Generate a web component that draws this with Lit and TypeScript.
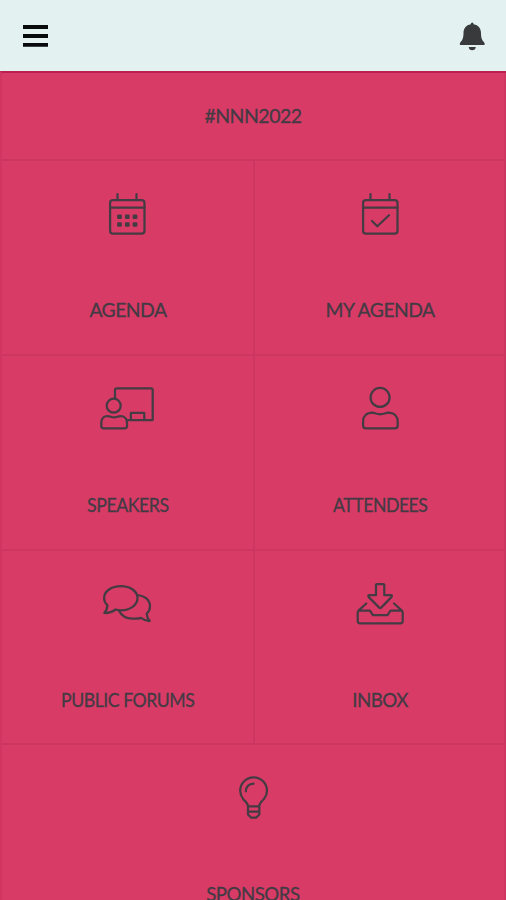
import { LitElement, html, svg, css } from "lit";
import { customElement } from "lit/decorators.js";

const calendar = svg`<rect x="13.1" y="9" width="34.4" height="33.6" rx="2.8"/><path d="M13 16.6H47.5M20.5 3V9M39.5 3V9"/>`;
const dots = [22.5, 30.3, 38].flatMap((x) =>
  [25.7, 33.5].map((y) => svg`<rect class="solid" x=${x - 2.4} y=${y - 2.3} width="4.8" height="4.6" rx="1.3"/>`)
);
const icons: Record<string, unknown> = {
  agenda: svg`${calendar}${dots}`,
  mine: svg`${calendar}<path d="M22 30L27.3 35.3L39 24.3"/>`,
  speakers: svg`<path d="M18 11.7V4Q18 2.3 19.7 2.3H54Q55.7 2.3 55.7 4V34H30.3M33.9 34V26.8H47.3V34"/><circle cx="16.7" cy="19.7" r="7"/><path d="M10 30Q12 30 13.8 30.8Q17 32 20.2 30.8Q22 30 24 30Q30 30.6 30 37V40Q30 42.3 27.7 42.3H6.6Q4.3 42.3 4.3 40V37Q4.3 30.6 10 30Z"/>`,
  attendees: svg`<circle cx="30.1" cy="11.4" r="9.5"/><path d="M21.5 26.7Q24 26.7 26 27.5Q30.3 29 34.6 27.5Q36.6 26.7 39 26.7Q47.7 27.3 47.7 36V39.5Q47.7 42.3 44.9 42.3H16Q13.1 42.3 13.1 39.5V36Q13.1 27.3 21.5 26.7Z"/>`,
  forums: svg`<path d="M10.4 24.1Q7.1 21.2 7.1 17.2C7.1 10.3 14.5 5 23.9 5S40.5 10.3 40.5 17.2S33 29.3 23.9 29.3Q21.2 29.3 18.5 28.5Q13.5 32.3 7.3 32Q10.3 28.6 10.4 24.1Z"/><path d="M40.2 14C47.5 14.5 53 19 53 25.3Q53 29.7 49.7 32.8Q49.8 36.8 52.8 40Q48.5 40.2 44 36.9Q40 38.2 35.5 37.5C29 37.5 24.5 34.8 22 29.7"/>`,
  inbox: svg`<path d="M26 4Q26 3 27 3H33.3Q34.3 3 34.3 4V14.2H40.5Q43 14.2 41.2 16.4L31.4 26.4Q30.2 27.5 29 26.4L19 16.4Q17.2 14.2 19.7 14.2H26Z"/><path d="M16.3 22.5L8.5 29.7Q7.7 30.6 7.7 32V40Q7.7 42.3 10 42.3H50.4Q52.7 42.3 52.7 40V32Q52.7 30.6 51.9 29.7L44 22.5M8.5 29.7H20L22.9 34.2H37.5L40.5 29.7H51.9"/>`,
  sponsors: svg`<path d="M25 31.3Q25 28.5 20.3 24.3Q17.2 20.3 17.2 15.8A13.4 13.4 0 0 1 44 15.8Q44 20.3 40.8 24.3Q36.3 28.5 36.3 31.3ZM25 31.3V39.5L28 42.5H33.3L36.3 39.5V31.3M25 36.6H36.3M22.8 16.3Q23.3 9 30.6 8.6"/>`,
};

@customElement("app-root")
export class AppRoot extends LitElement {
  static styles = css`
    :host { display: block; height: 900px; overflow: hidden; background: #d93b67; color: #443a43; font-family: Lato, "Open Sans", sans-serif; }
    .bar { height: 71px; box-sizing: border-box; padding: 0 21px 0 23px; display: flex; justify-content: space-between; align-items: center; background: #e3f1f1; }
    .menu { width: 26px; height: 22px; }
    .bell { width: 26px; height: 30px; }
    .grid { display: grid; grid-template-columns: 253px 251px; grid-template-rows: 88px 195px 195px 194px 195px; box-sizing: border-box; border-top: 2px solid #be1f51; border-left: 2px solid #d03661; width: 506px; }
    .cell { box-sizing: border-box; border-bottom: 2px solid #cc3660; border-right: 2px solid #cc3660; display: flex; flex-direction: column; align-items: center; min-width: 0; }
    .wide { grid-column: span 2; border-right-color: #d03661; }
    .title { justify-content: center; }
    .icon { width: 60px; height: 48px; margin: 30px 1px 0 0; fill: none; stroke: #443b43; stroke-width: 2.25; stroke-linejoin: round; stroke-linecap: round; flex: none; }
    .right { padding-left: 2px; }
    .wide .icon { margin-right: 0; }
    .solid { fill: #443b43; stroke: none; }
    .label { font-size: 19.5px; line-height: 24px; letter-spacing: -0.5px; white-space: nowrap; -webkit-text-stroke: 0.3px #443a43; }
    .icon + .label { margin-top: 59px; }
  `;

  tile(icon: string, text: string, scale: number, place = "") {
    return html`<div class="cell ${place}">
      <svg class="icon" viewBox="0 0 60 48">${icons[icon]}</svg>
      <span class="label" style="transform:scaleX(${scale})">${text}</span>
    </div>`;
  }

  render() {
    return html`
      <header class="bar">
        <svg class="menu" viewBox="0 0 26 22"><path d="M0 2H25M0 11H25M0 19.8H25" stroke="#080b0c" stroke-width="3.8"/></svg>
        <svg class="bell" viewBox="0 0 26 30"><path fill="#393a3c" d="M11.8 3.2Q11.8 1.5 13.2 1.5T14.6 3.2C19.5 4 22 7.5 22 12C22 17 23 19.2 25.2 21.4Q26 22.3 25.5 24H1Q.5 22.3 1.3 21.4C3.5 19.2 4.5 17 4.5 12C4.5 7.5 7 4 11.8 3.2ZM9.7 26H16.8Q16.3 29.3 13.2 29.3T9.7 26Z"/></svg>
      </header>
      <main class="grid">
        <div class="cell wide title"><span class="label">#NNN2022</span></div>
        ${this.tile("agenda", "AGENDA", 0.99)}
        ${this.tile("mine", "MY AGENDA", 0.99, "right")}
        ${this.tile("speakers", "SPEAKERS", 0.91)}
        ${this.tile("attendees", "ATTENDEES", 0.905, "right")}
        ${this.tile("forums", "PUBLIC FORUMS", 0.905)}
        ${this.tile("inbox", "INBOX", 0.96, "right")}
        ${this.tile("sponsors", "SPONSORS", 0.955, "wide")}
      </main>`;
  }
}
